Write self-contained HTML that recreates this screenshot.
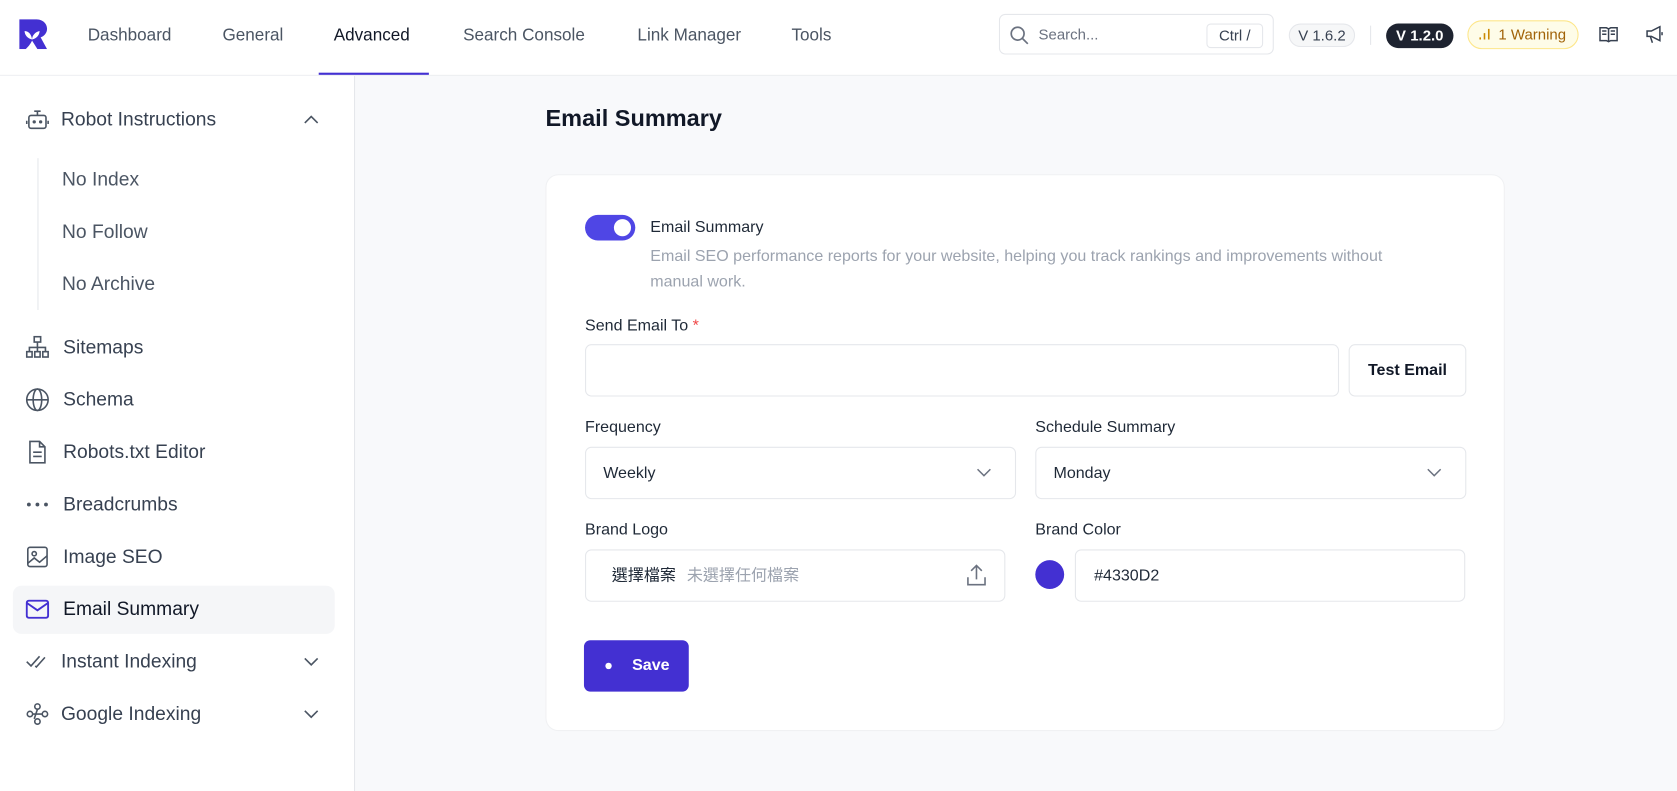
<!DOCTYPE html>
<html><head><meta charset="utf-8"><style>
*{box-sizing:border-box;margin:0;padding:0}
html,body{width:1677px;height:791px;overflow:hidden;background:#f8f9fb}
#w{width:1568px;height:740px;transform:scale(1.06952,1.0689);transform-origin:0 0;position:relative;font-family:"Liberation Sans","Noto Sans CJK TC",sans-serif;color:#1f2937}
.a{position:absolute}
.nav{position:absolute;top:25px;font-size:16px;color:#4b5563}
.side{position:absolute;left:0;top:71px;width:332px;height:669px;background:#fff;border-right:1px solid #e5e7eb}
.si{position:absolute;left:59px;font-size:18px;color:#374151;transform:translateY(-50%)}
.ic{position:absolute;left:24px;transform:translateY(-50%)}
.lbl{position:absolute;font-size:15px;color:#1f2937;font-weight:500}
.inp{position:absolute;border:1px solid #e5e7eb;border-radius:6px;background:#fff}
</style></head><body><div id="w">
<div class="a" style="left:0;top:0;width:1568px;height:71px;background:#fff;border-bottom:1px solid #eceef1"></div>
<svg class="a" style="left:18px;top:18px" width="27" height="28" viewBox="0 0 27 28"><path d="M0 0H15C22 0 26 4 26 9C26 13 23 16 20 17L26 28H17L12 20C10 24 8 26 6 28H0Z" fill="#4330d2"/><path d="M12 20C12 15 9 11 5 11C5 15 8 18 12 19C12 15 15 12 19 11C19 15 16 18 12 19Z" fill="#fff"/></svg>
<div class="nav" style="left:82px">Dashboard</div>
<div class="nav" style="left:208px">General</div>
<div class="nav" style="left:312px;color:#111827">Advanced</div>
<div class="a" style="left:298px;top:68px;width:103px;height:2px;background:#4330d2"></div>
<div class="nav" style="left:433px">Search Console</div>
<div class="nav" style="left:596px">Link Manager</div>
<div class="nav" style="left:740px">Tools</div>
<div class="a" style="left:934px;top:13px;width:257px;height:38px;border:1px solid #e5e7eb;border-radius:6px"></div>
<svg class="a" style="left:944px;top:24px" width="18" height="18" viewBox="0 0 18 18" fill="none" stroke="#6b7280" stroke-width="1.6"><circle cx="7.5" cy="7.5" r="6"/><path d="M12 12l5 5"/></svg>
<div class="a" style="left:971px;top:24px;font-size:14px;color:#6b7280">Search...</div>
<div class="a" style="left:1128px;top:22px;width:53px;height:23px;border:1px solid #e5e7eb;border-radius:4px;font-size:14px;text-align:center;line-height:21px;color:#374151">Ctrl /</div>
<div class="a" style="left:1205px;top:22px;width:62px;height:22px;border:1px solid #e5e7eb;background:#f6f7f8;border-radius:11px;font-size:14px;text-align:center;line-height:20px;color:#374151">V 1.6.2</div>
<div class="a" style="left:1281px;top:24px;width:1px;height:18px;background:#e5e7eb"></div>
<div class="a" style="left:1296px;top:22px;width:63px;height:23px;background:#1e2330;border-radius:12px;font-size:14px;font-weight:bold;text-align:center;line-height:23px;color:#fff">V 1.2.0</div>
<div class="a" style="left:1372px;top:19px;width:104px;height:27px;background:#fefce8;border:1px solid #fde68a;border-radius:14px;font-size:14px;line-height:25px;color:#a16207;padding-left:28px">1 Warning</div>
<svg class="a" style="left:1382px;top:26px" width="12" height="12"><path d="M2 11V9M6 11V5M10 11V1" stroke="#ca8a04" stroke-width="1.5"/></svg>
<svg class="a" style="left:1495px;top:24px" width="18" height="16" viewBox="0 0 18 16" fill="none" stroke="#374151" stroke-width="1.4"><path d="M1 2h6l2 1 2-1h6v12h-6l-2 1-2-1H1z M9 3v12 M3 5h4M3 8h4M11 5h4M11 8h4"/></svg>
<svg class="a" style="left:1538px;top:23px" width="18" height="18" viewBox="0 0 18 18" fill="none" stroke="#374151" stroke-width="1.4"><path d="M2 6h4l8-4v13l-8-4H2z M5 11l2 6 M16 7v3"/></svg>

<div class="side"></div>
<svg class="ic" style="top:112px" width="22" height="20" viewBox="0 0 22 20" fill="none" stroke="#4b5563" stroke-width="1.5"><rect x="3" y="6" width="16" height="12" rx="2"/><path d="M11 6V2M8 2h6M1 11v3M21 11v3"/><circle cx="8" cy="12" r=".8" fill="#4b5563"/><circle cx="14" cy="12" r=".8" fill="#4b5563"/></svg>
<div class="si" style="top:112px;left:57px">Robot Instructions</div>
<svg class="a" style="left:284px;top:107px" width="14" height="9"><path d="M1 8l6-6 6 6" stroke="#4b5563" fill="none" stroke-width="1.5"/></svg>
<div class="a" style="left:35px;top:148px;width:1px;height:142px;background:#e5e7eb"></div>
<div class="si" style="top:168px;left:58px;color:#4b5563">No Index</div>
<div class="si" style="top:217px;left:58px;color:#4b5563">No Follow</div>
<div class="si" style="top:266px;left:58px;color:#4b5563">No Archive</div>
<svg class="ic" style="top:325px" width="22" height="22" viewBox="0 0 22 22" fill="none" stroke="#4b5563" stroke-width="1.5"><rect x="8" y="1" width="6" height="5"/><rect x="1" y="15" width="5" height="5"/><rect x="16" y="15" width="5" height="5"/><path d="M11 6v4M3.5 15v-4h15v4M11 10v5"/><rect x="8.5" y="15" width="5" height="5"/></svg>
<div class="si" style="top:325px">Sitemaps</div>
<svg class="ic" style="top:374px" width="22" height="22" viewBox="0 0 22 22" fill="none" stroke="#4b5563" stroke-width="1.5"><circle cx="11" cy="11" r="10"/><ellipse cx="11" cy="11" rx="4" ry="10"/><path d="M1 11h20"/></svg>
<div class="si" style="top:374px">Schema</div>
<svg class="ic" style="top:423px" width="22" height="22" viewBox="0 0 22 22" fill="none" stroke="#4b5563" stroke-width="1.5"><path d="M4 1h9l5 5v15H4z M13 1v5h5 M7 11h8M7 15h8"/></svg>
<div class="si" style="top:423px">Robots.txt Editor</div>
<svg class="ic" style="top:472px" width="22" height="6"><circle cx="3" cy="3" r="1.8" fill="#4b5563"/><circle cx="11" cy="3" r="1.8" fill="#4b5563"/><circle cx="19" cy="3" r="1.8" fill="#4b5563"/></svg>
<div class="si" style="top:472px">Breadcrumbs</div>
<svg class="ic" style="top:521px" width="22" height="22" viewBox="0 0 22 22" fill="none" stroke="#4b5563" stroke-width="1.5"><rect x="2" y="2" width="18" height="18" rx="2"/><circle cx="8" cy="8" r="2"/><path d="M2 17l6-5 5 4 7-6"/></svg>
<div class="si" style="top:521px">Image SEO</div>
<div class="a" style="left:12px;top:548px;width:301px;height:45px;background:#f5f6f8;border-radius:8px"></div>
<svg class="ic" style="top:570px" width="22" height="18" viewBox="0 0 22 18" fill="none" stroke="#4330d2" stroke-width="1.8"><rect x="1" y="1" width="20" height="16" rx="2"/><path d="M1 3l10 7 10-7"/></svg>
<div class="si" style="top:570px;color:#111827">Email Summary</div>
<svg class="ic" style="top:619px" width="22" height="14" viewBox="0 0 22 14" fill="none" stroke="#4b5563" stroke-width="1.5"><path d="M1 7l4 4 8-9 M9 11l1 1 8-9"/></svg>
<div class="si" style="top:619px;left:57px">Instant Indexing</div>
<svg class="a" style="left:284px;top:615px" width="14" height="9"><path d="M1 1l6 6 6-6" stroke="#4b5563" fill="none" stroke-width="1.5"/></svg>
<svg class="ic" style="top:668px" width="22" height="22" viewBox="0 0 22 22" fill="none" stroke="#4b5563" stroke-width="1.5"><circle cx="11" cy="4" r="2.5"/><circle cx="4" cy="11" r="2.5"/><circle cx="18" cy="11" r="2.5"/><circle cx="11" cy="18" r="2.5"/><path d="M6.5 11h9M11 6.5l-3 9"/></svg>
<div class="si" style="top:668px;left:57px">Google Indexing</div>
<svg class="a" style="left:284px;top:664px" width="14" height="9"><path d="M1 1l6 6 6-6" stroke="#4b5563" fill="none" stroke-width="1.5"/></svg>

<div class="a" style="left:510px;top:98px;font-size:22px;font-weight:600;color:#111827">Email Summary</div>
<div class="a" style="left:510px;top:163px;width:897px;height:521px;background:#fff;border-radius:12px;border:1px solid #f0f1f3"></div>
<div class="a" style="left:547px;top:201px;width:47px;height:24px;border-radius:12px;background:#4f46e5"></div>
<div class="a" style="left:574px;top:205px;width:16px;height:16px;border-radius:50%;background:#fff"></div>
<div class="lbl" style="left:608px;top:204px">Email Summary</div>
<div class="a" style="left:608px;top:228px;width:725px;font-size:15px;line-height:24px;color:#9ca3af">Email SEO performance reports for your website, helping you track rankings and improvements without manual work.</div>
<div class="lbl" style="left:547px;top:296px">Send Email To<span style="color:#ef4444"> *</span></div>
<div class="inp" style="left:547px;top:322px;width:705px;height:49px"></div>
<div class="inp" style="left:1261px;top:322px;width:110px;height:49px;font-size:15px;font-weight:600;text-align:center;line-height:47px;color:#111827">Test Email</div>
<div class="lbl" style="left:547px;top:391px">Frequency</div>
<div class="inp" style="left:547px;top:418px;width:403px;height:49px;font-size:15px;line-height:47px;padding-left:16px">Weekly</div>
<svg class="a" style="left:913px;top:438px" width="14" height="9"><path d="M1 1l6 6 6-6" stroke="#6b7280" fill="none" stroke-width="1.4"/></svg>
<div class="lbl" style="left:968px;top:391px">Schedule Summary</div>
<div class="inp" style="left:968px;top:418px;width:403px;height:49px;font-size:15px;line-height:47px;padding-left:16px">Monday</div>
<svg class="a" style="left:1334px;top:438px" width="14" height="9"><path d="M1 1l6 6 6-6" stroke="#6b7280" fill="none" stroke-width="1.4"/></svg>
<div class="lbl" style="left:547px;top:487px">Brand Logo</div>
<div class="inp" style="left:547px;top:514px;width:393px;height:49px;font-size:15px;line-height:47px;padding-left:24px">選擇檔案 <span style="color:#9ca3af;margin-left:6px">未選擇任何檔案</span></div>
<svg class="a" style="left:903px;top:527px" width="20" height="22" viewBox="0 0 20 22" fill="none" stroke="#6b7280" stroke-width="1.5"><path d="M10 15V2M5 7l5-5 5 5M2 13v7h16v-7"/></svg>
<div class="lbl" style="left:968px;top:487px">Brand Color</div>
<div class="a" style="left:968px;top:524px;width:27px;height:27px;border-radius:50%;background:#4330d2"></div>
<div class="inp" style="left:1005px;top:514px;width:365px;height:49px;font-size:15px;line-height:47px;padding-left:17px">#4330D2</div>
<div class="a" style="left:546px;top:599px;width:98px;height:48px;border-radius:6px;background:#4330d2;color:#fff;font-size:15px;font-weight:bold;line-height:48px;padding-left:45px">Save</div>
<div class="a" style="left:566px;top:620px;width:6px;height:6px;border-radius:50%;background:#fff"></div>
</div></body></html>
